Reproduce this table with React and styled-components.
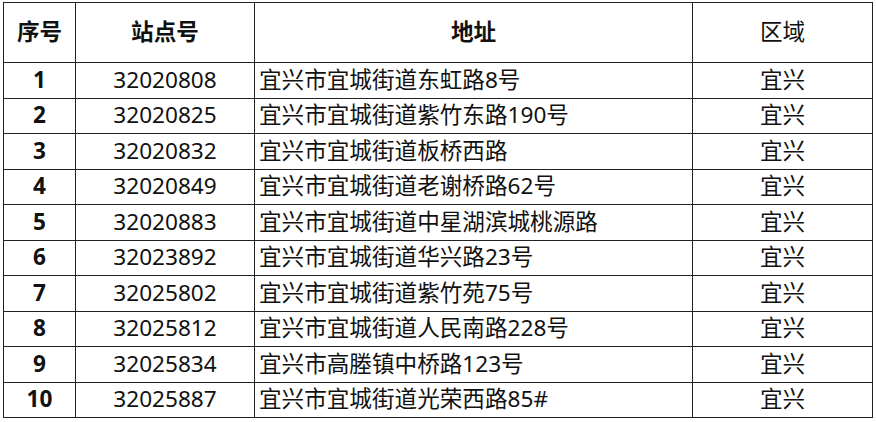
import React from "react";
import styled, { createGlobalStyle } from "styled-components";

const GlobalStyle = createGlobalStyle`
    body {
        margin: 0;
        background: #ffffff;
        font-family: "Noto Sans", "Noto Sans CJK SC", sans-serif;
        color: #111111;
    }
`;

const Page = styled.div`
    padding: 2px 0 0 3px;
`;

const Table = styled.table`
    border-collapse: collapse;
    table-layout: fixed;
    width: 870px;
    font-size: 22.6px;
`;

const HeadRow = styled.tr`
    height: 60px;
`;

const Row = styled.tr`
    height: 35.5px;
`;

const Cell = styled.td`
    border: 1px solid #222222;
    padding: 0 4px;
    line-height: 1;
    white-space: nowrap;
    text-align: ${(p) => (p.$left ? "left" : "center")};
    font-weight: ${(p) => (p.$bold ? 700 : 400)};
`;

const HeadCell = styled(Cell).attrs({ as: "th" })``;

const stations = [
    ["1", "32020808", "宜兴市宜城街道东虹路8号"],
    ["2", "32020825", "宜兴市宜城街道紫竹东路190号"],
    ["3", "32020832", "宜兴市宜城街道板桥西路"],
    ["4", "32020849", "宜兴市宜城街道老谢桥路62号"],
    ["5", "32020883", "宜兴市宜城街道中星湖滨城桃源路"],
    ["6", "32023892", "宜兴市宜城街道华兴路23号"],
    ["7", "32025802", "宜兴市宜城街道紫竹苑75号"],
    ["8", "32025812", "宜兴市宜城街道人民南路228号"],
    ["9", "32025834", "宜兴市高塍镇中桥路123号"],
    ["10", "32025887", "宜兴市宜城街道光荣西路85#"],
];

function App() {
    return (
        <Page>
            <GlobalStyle />
            <Table>
                <colgroup>
                    <col style={{ width: 72 }} />
                    <col style={{ width: 179 }} />
                    <col style={{ width: 438 }} />
                    <col style={{ width: 180 }} />
                </colgroup>
                <thead>
                    <HeadRow>
                        <HeadCell $bold>序号</HeadCell>
                        <HeadCell $bold>站点号</HeadCell>
                        <HeadCell $bold>地址</HeadCell>
                        <HeadCell>区域</HeadCell>
                    </HeadRow>
                </thead>
                <tbody>
                    {stations.map(([no, id, addr]) => (
                        <Row key={no}>
                            <Cell $bold>{no}</Cell>
                            <Cell>{id}</Cell>
                            <Cell $left>{addr}</Cell>
                            <Cell>宜兴</Cell>
                        </Row>
                    ))}
                </tbody>
            </Table>
        </Page>
    );
}

export default App;
